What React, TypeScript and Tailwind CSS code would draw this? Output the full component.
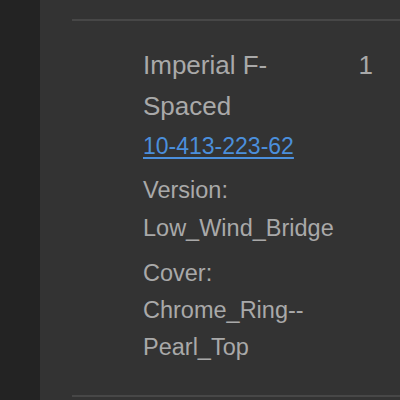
import React from "react";

export default function App() {
  return (
    <div
      className="flex h-[400px] w-[400px] overflow-hidden bg-[#333333]"
      style={{ fontFamily: '"Liberation Sans", Arial, sans-serif' }}
    >
      <div className="w-[40px] shrink-0 bg-[#232323]" />
      <div className="flex-1 pl-[32px] pt-[19px]">
        <div className="h-[378px] border-y-2 border-[#474747]">
          <div className="flex justify-between pl-[71px] pr-[27px] pt-[24px]">
            <div className="flex flex-col text-[#a9a9a9]">
              <div className="text-[26px] leading-[40.5px]">
                Imperial F-
                <br />
                Spaced
              </div>
              <a
                href="#"
                className="text-[23px] leading-[40px] text-[#4b8fdc] underline underline-offset-[3px]"
              >
                10-413-223-62
              </a>
              <div className="mt-[5px] text-[23.5px] leading-[38px]">
                Version:
                <br />
                Low_Wind_Bridge
              </div>
              <div className="mt-[8px] text-[23.5px] leading-[37px]">
                Cover:
                <br />
                Chrome_Ring--
                <br />
                Pearl_Top
              </div>
            </div>
            <div className="text-[26px] leading-[40px] text-[#a9a9a9]">1</div>
          </div>
        </div>
      </div>
    </div>
  );
}
